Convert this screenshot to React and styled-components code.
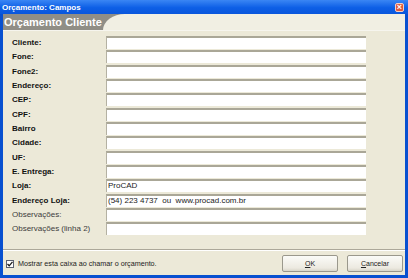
import React from 'react'
import styled, { createGlobalStyle } from 'styled-components'

const fields = [
  { label: 'Cliente:', bold: true },
  { label: 'Fone:', bold: true },
  { label: 'Fone2:', bold: true },
  { label: 'Endereço:', bold: true },
  { label: 'CEP:', bold: true },
  { label: 'CPF:', bold: true },
  { label: 'Bairro', bold: true },
  { label: 'Cidade:', bold: true },
  { label: 'UF:', bold: true },
  { label: 'E. Entrega:', bold: true },
  { label: 'Loja:', bold: true, value: 'ProCAD' },
  { label: 'Endereço Loja:', bold: true, value: '(54) 223 4737  ou  www.procad.com.br' },
  { label: 'Observações:', bold: false },
  { label: 'Observações (linha 2)', bold: false },
]

export default function App() {
  return (
    <>
      <Global />
      <Window>
        <TitleBar>
          <TitleText>Orçamento: Campos</TitleText>
          <CloseBtn>×</CloseBtn>
        </TitleBar>
        <Body>
          <Header>
            <HeaderTab>Orçamento Cliente</HeaderTab>
            <HeaderFill />
          </Header>
          <Form>
            {fields.map((f) => (
              <Row key={f.label}>
                <Label $bold={f.bold}>{f.label}</Label>
                <Field>{f.value}</Field>
              </Row>
            ))}
          </Form>
          <Footer>
            <CheckRow>
              <CheckBox>
                <svg width="6" height="6" viewBox="0 0 6 6">
                  <path d="M0.5 3 L2.2 4.8 L5.5 0.8" stroke="#1a1a1a" strokeWidth="1.3" fill="none" />
                </svg>
              </CheckBox>
              <CheckText>Mostrar esta caixa ao chamar o orçamento.</CheckText>
            </CheckRow>
            <Buttons>
              <Button><u>O</u>K</Button>
              <Button><u>C</u>ancelar</Button>
            </Buttons>
          </Footer>
        </Body>
      </Window>
    </>
  )
}

const Global = createGlobalStyle`
  html, body { margin: 0; padding: 0; background: #fff; }
  body { font-family: "Liberation Sans", Arial, sans-serif; }
`

const Window = styled.div`
  width: 408px;
  height: 278px;
  box-sizing: border-box;
  display: flex;
  flex-direction: column;
  background: #0850d0;
  padding: 0 3px 3px 3px;
`

const TitleBar = styled.div`
  height: 14px;
  display: flex;
  align-items: center;
  justify-content: space-between;
  margin: 0 -3px;
  padding: 0 4px 0 2px;
  background: linear-gradient(#3a86f4, #0d5fe6 55%, #0a56dc);
`

const TitleText = styled.div`
  color: #fff;
  font-weight: bold;
  font-size: 8px;
`

const CloseBtn = styled.div`
  width: 9px;
  height: 9px;
  border-radius: 2px;
  border: 1px solid #f4d0c4;
  box-sizing: border-box;
  background: #e0583c;
  color: #fff;
  font-size: 9px;
  line-height: 6px;
  text-align: center;
  font-weight: bold;
`

const Body = styled.div`
  flex: 1;
  display: flex;
  flex-direction: column;
  background: #ece9d8;
`

const Header = styled.div`
  height: 16px;
  display: flex;
  background: #908e86;
  border-bottom: 1px solid #f6f5ee;
`

const HeaderTab = styled.div`
  width: 99px;
  padding-left: 1px;
  color: #fff;
  font-weight: bold;
  font-size: 11px;
  line-height: 16px;
  white-space: nowrap;
`

const HeaderFill = styled.div`
  flex: 1;
  background: #f1efe3;
  border-top-left-radius: 22px 16px;
`

const Form = styled.div`
  display: grid;
  grid-template-rows: repeat(14, 14.33px);
  padding: 5px 0 0 9px;
`

const Row = styled.div`
  display: grid;
  grid-template-columns: 94px 260px;
  align-items: start;
`

const Label = styled.div`
  font-size: 8px;
  line-height: 13px;
  font-weight: ${(p) => (p.$bold ? 'bold' : 'normal')};
  color: ${(p) => (p.$bold ? '#111' : '#3c3c3c')};
  white-space: nowrap;
`

const Field = styled.div`
  height: 13px;
  box-sizing: border-box;
  background: #fff;
  border-top: 2px solid #aaa797;
  border-left: 1px solid #b4b1a2;
  font-size: 8px;
  line-height: 10px;
  padding-left: 1px;
  color: #222;
  white-space: pre;
`

const Footer = styled.div`
  margin-top: auto;
  height: 25px;
  display: flex;
  align-items: center;
  justify-content: space-between;
  border-top: 1px solid #aca899;
  box-shadow: inset 0 1px 0 #fff;
  padding: 0 2px 0 3px;
`

const CheckRow = styled.div`
  display: flex;
  align-items: center;
  gap: 4px;
  margin-top: 2px;
`

const CheckBox = styled.div`
  width: 8px;
  height: 8px;
  box-sizing: border-box;
  border: 1px solid #5a6070;
  background: #fff;
  display: flex;
  align-items: center;
  justify-content: center;
`

const CheckText = styled.div`
  font-size: 7.2px;
  color: #222;
`

const Buttons = styled.div`
  display: flex;
  gap: 9px;
  margin-top: 1px;
`

const Button = styled.div`
  width: 56px;
  height: 17px;
  box-sizing: border-box;
  border: 1px solid #9a988c;
  border-radius: 2px;
  background: linear-gradient(#fbfbf8, #ece9e0 80%, #d8d5c8);
  font-size: 7px;
  color: #222;
  display: flex;
  align-items: center;
  justify-content: center;
`
